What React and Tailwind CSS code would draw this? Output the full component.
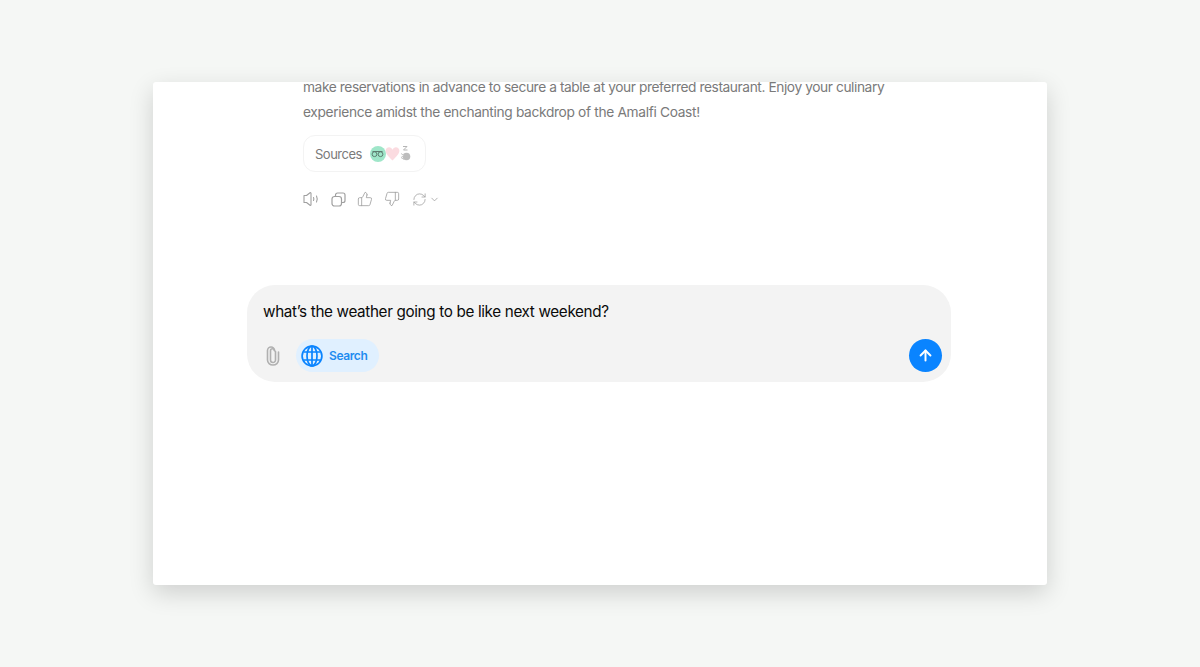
import { ThumbsUp, ThumbsDown, RefreshCw, ChevronDown, ArrowUp } from "lucide-react";

function Sources() {
  return (
    <div className="mt-[10px] flex h-[37px] w-[123px] items-center rounded-[12px] border border-[#f3f3f3] pl-[11px]">
      <span className="pt-[1px] text-[13px] tracking-[-0.5px] text-[#7a7a7a]">Sources</span>
      <div className="ml-[8px] flex items-center">
        <div className="flex h-[16px] w-[16px] items-center justify-center rounded-full bg-[#9fe6c9]">
          <svg width="13" height="8" viewBox="0 0 13 8" fill="none" stroke="#5d7d70" strokeWidth="1">
            <circle cx="3.500" cy="4.200" r="2.400" />
            <circle cx="9.500" cy="4.200" r="2.400" />
            <path d="M1.500 1.500h10" />
          </svg>
        </div>
        <svg width="15" height="15" viewBox="0 0 24 24" fill="#fbdbe0" className="-ml-[1px]">
          <path d="M12 23C5 16 1 12 1 7.500 1 4 3.600 2 6.500 2 9 2 11 3.500 12 6c1-2.500 3-4 5.500-4C20.400 2 23 4 23 7.500 23 12 19 16 12 23z" />
        </svg>
        <svg width="13" height="17" viewBox="0 0 13 17" fill="none" className="-ml-[1px]">
          <path d="M4 1.500h4L4.500 5h4" stroke="#b5b5b5" strokeWidth="1" />
          <circle cx="7.500" cy="11.500" r="3.800" fill="#bdbdbd" />
          <path d="M2 8.500l3 2-3 2 3 2" stroke="#c9c9c9" strokeWidth="1" />
        </svg>
      </div>
    </div>
  );
}

function Actions() {
  return (
    <div className="mt-[19px] flex h-[16px] items-center text-[#a0a0a0]">
      <svg width="16" height="14" viewBox="0 0 16 14" fill="none" stroke="currentColor" strokeWidth="1.100" strokeLinejoin="round">
        <path d="M1 3.500h2.500L7 .8c.5-.3 1-.1 1 .5v11.400c0 .6-.5.8-1 .5l-3.500-2.700H1z" />
        <path d="M10.500 5.500c.5 1 .5 2 0 3M13.500 4c1 2 1 4 0 6" strokeLinecap="round" />
      </svg>
      <svg width="15" height="15" viewBox="0 0 15 15" fill="none" stroke="currentColor" strokeWidth="1.200" className="ml-[12px]">
        <rect x="1" y="4.500" width="9.500" height="9.500" rx="2.500" />
        <path d="M4.500 4.500V3a2 2 0 0 1 2-2H12a2 2 0 0 1 2 2v5.500a2 2 0 0 1-2 2h-1.500" />
      </svg>
      <ThumbsUp size={16} strokeWidth={1.25} className="ml-[11px]" />
      <ThumbsDown size={16} strokeWidth={1.25} className="ml-[11px]" />
      <RefreshCw size={15} strokeWidth={1.25} className="ml-[12px]" />
      <ChevronDown size={11} strokeWidth={1.75} className="ml-[2px]" />
    </div>
  );
}

function Composer() {
  return (
    <div className="mt-[78px] ml-[94px] flex h-[97px] w-[704px] flex-col rounded-[28px] bg-[#f3f3f3] px-[9px] pt-[16px]">
      <div className="pl-[7px] text-[15.250px] leading-[22px] tracking-[-0.35px] text-[#0a0a0a]">what’s the weather going to be like next weekend?</div>
      <div className="mt-[16px] flex items-center justify-between">
        <div className="flex items-center">
          <svg width="16" height="20" viewBox="0 0 16 20" fill="none" stroke="#b0b0b0" strokeWidth="1.600" strokeLinecap="round" className="ml-[9px]">
            <path d="M10.500 5.500v8.500a2.500 2.500 0 0 1-5 0V4.800a2 2 0 0 1 4 0" />
            <path d="M13.500 6v8a5.500 5 0 0 1-11 0V4.500a3.500 3.500 0 0 1 7 0" />
          </svg>
          <div className="ml-[15px] flex h-[33px] w-[83px] items-center rounded-full bg-[#e0f0ff] pl-[5px]">
            <svg width="22" height="22" viewBox="0 0 22 22" fill="none" stroke="#0a84ff" strokeWidth="1.700">
              <circle cx="11" cy="11" r="9.900" />
              <ellipse cx="11" cy="11" rx="5" ry="9.900" />
              <path d="M11 1.100v19.800M2.500 7h17M2.500 15h17" />
            </svg>
            <span className="ml-[6px] text-[12px] font-semibold tracking-[-0.4px] text-[#1f8cf0]">Search</span>
          </div>
        </div>
        <div className="flex h-[33px] w-[33px] items-center justify-center rounded-full bg-[#0a84ff]">
          <ArrowUp size={17} strokeWidth={2.75} className="text-white" />
        </div>
      </div>
    </div>
  );
}

export default function App() {
  return (
    <div className="h-[667px] overflow-hidden bg-[#f5f7f5] pt-[82px] font-['Inter',sans-serif]">
      <div className="mx-auto h-[503px] w-[894px] overflow-hidden rounded-[3px] bg-white shadow-[0_8px_24px_rgba(0,0,0,0.16)]">
        <div className="-mt-[7px] pl-[150px] text-[13.750px] leading-[25px] tracking-[-0.42px] text-[#7a7a7a]">
          <p>make reservations in advance to secure a table at your preferred restaurant. Enjoy your culinary</p>
          <p className="tracking-[-0.34px]">experience amidst the enchanting backdrop of the Amalfi Coast!</p>
          <Sources />
          <Actions />
        </div>
        <Composer />
      </div>
    </div>
  );
}
